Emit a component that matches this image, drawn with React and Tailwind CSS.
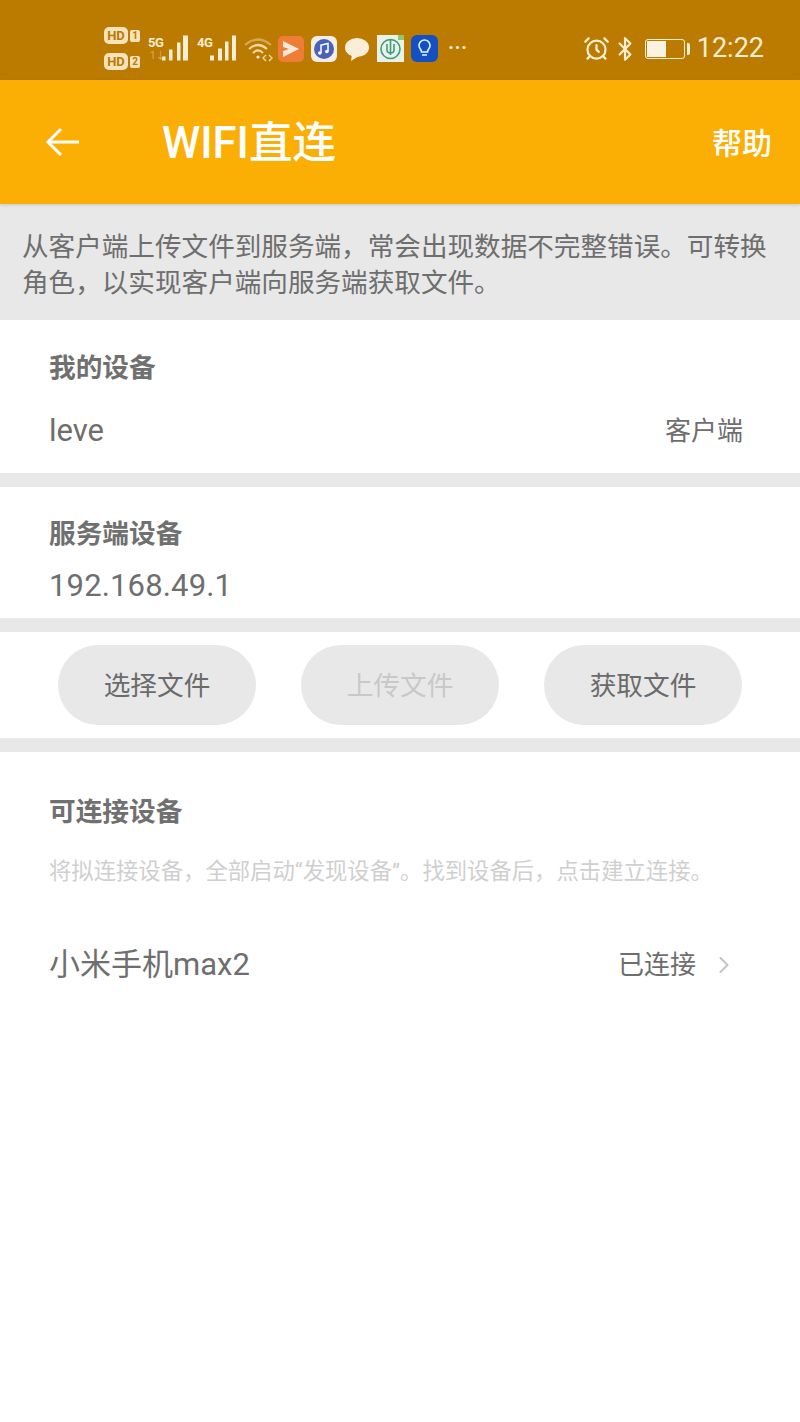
import { ChevronRight, AlarmClock, Bluetooth } from 'lucide-react';

const FONT = "font-['Roboto','Noto_Sans_CJK_SC',sans-serif]";

// positions of the four signal bars differ a little between the two sims
const Bars = ({ label, bars, roaming }) => (
  <div className="h-[30px] w-[40px] relative">
    <span className="absolute left-0 top-[2px] text-[13px] leading-[14px] font-bold tracking-[-0.5px] text-[#fbeed2]">{label}</span>
    {roaming && <span className="absolute left-[2px] top-[16px] text-[10px] leading-[12px] text-[#dcae62]">1↓</span>}
    <svg width="40" height="30" viewBox="0 0 40 30" fill="#fbeed2">
      {bars.map(([x, w, h]) => (
        <rect key={x} x={x} y={26.5 - h} width={w} height={h} />
      ))}
    </svg>
  </div>
);

const Hd = ({ n }) => (
  <div className="flex items-center gap-[2px]">
    <span className="rounded-[5px] bg-[#f6e3bb] text-[#bb7a00] text-[13px] leading-[17px] font-bold w-[24px] text-center">HD</span>
    <span className="rounded-[2px] bg-[#f6e3bb] text-[#bb7a00] text-[10px] leading-[12px] font-bold w-[10px] text-center">{n}</span>
  </div>
);

const AppIcons = () => (
  <>
    <svg width="26" height="26" viewBox="0 0 26 26">
      <rect width="26" height="26" rx="5" fill="#ee7d36" />
      <path d="M5 5 L21 13 L5 21 L5 15 L11 13 L5 11 Z" fill="#fbe9d8" />
    </svg>
    <svg width="26" height="26" viewBox="0 0 26 26">
      <rect width="26" height="26" rx="6" fill="#f4efe6" />
      <circle cx="13" cy="13" r="10" fill="#4a63b8" />
      <path d="M10 17 V9 L17 7.5 V15.5" fill="none" stroke="#fff" strokeWidth="1.5" />
      <circle cx="8.8" cy="17" r="1.8" fill="#fff" />
      <circle cx="15.8" cy="15.5" r="1.8" fill="#fff" />
    </svg>
    <svg width="26" height="26" viewBox="0 0 26 26">
      <ellipse cx="13" cy="11.5" rx="12" ry="9.5" fill="#fbeed8" />
      <path d="M8 18 L7 25 L15 20 Z" fill="#fbeed8" />
    </svg>
    <svg width="27" height="27" viewBox="0 0 27 27">
      <rect width="27" height="27" fill="#e9f2ea" />
      <circle cx="13.5" cy="14" r="9.5" fill="none" stroke="#3f9b78" strokeWidth="1.6" />
      <path d="M13.5 4 V20 M10 9 V15 Q10 18 13.5 18 Q17 18 17 15 V9" fill="none" stroke="#3f9b78" strokeWidth="1.6" />
      <rect x="21" y="0" width="6" height="5" fill="#8ccb6a" />
    </svg>
    <svg width="27" height="27" viewBox="0 0 27 27">
      <rect width="27" height="27" rx="6" fill="#1250c4" />
      <path d="M10.5 17 C10.5 14.5 8 13.5 8 10.5 A5.5 5.5 0 0 1 19 10.5 C19 13.5 16.5 14.5 16.5 17 Z M11 20 H16" fill="none" stroke="#e8eefc" strokeWidth="1.6" />
    </svg>
  </>
);

const StatusBar = () => (
  <div className="h-20 bg-[#bb7a00] flex items-center pl-[104px] pr-[36px] pt-[17px] text-[#fbeed2]">
    <div className="flex flex-col gap-[9px] w-[36px]">
      <Hd n="1" />
      <Hd n="2" />
    </div>
    <div className="flex items-center gap-[9px] ml-[8px]">
      <Bars label="5G" roaming bars={[[14, 3.5, 4], [21, 3.5, 11], [29, 3.5, 18], [35, 5, 25]]} />
      <Bars label="4G" bars={[[13, 4, 5], [21, 4, 12], [28, 3.5, 19], [35, 4, 25]]} />
    </div>
    <svg className="ml-[6px]" width="30" height="26" viewBox="0 0 30 26" fill="none" stroke="#f3d9a0" strokeWidth="2.2">
      <path d="M2 9 Q15 -2 28 9" stroke="#d9a951" />
      <path d="M6 13 Q15 5 24 13" />
      <path d="M10 17 Q15 12 20 17" />
      <circle cx="15" cy="21" r="1.6" fill="#fbeed2" stroke="none" />
      <path d="M23 19 L20 22 L23 25 M26 19 L29 22 L26 25" strokeWidth="1.4" />
    </svg>
    <div className="flex items-center gap-[7px] ml-[5px]">
      <AppIcons />
    </div>
    <span className="ml-[10px] text-[20px] leading-none font-bold tracking-[0.5px] pb-[3px]">···</span>
    <div className="flex-1" />
    <AlarmClock size={27} strokeWidth={2} />
    <Bluetooth size={26} strokeWidth={2} className="ml-[2px]" />
    <div className="ml-[7px] flex items-center">
      <div className="w-[40px] h-[20px] border-[1.5px] border-[#fbeed2] rounded-[3px] p-[1px]">
        <div className="w-[19px] h-full bg-[#fbf2e2]" />
      </div>
      <div className="w-[3px] h-[12px] ml-[2px] bg-[#fbeed2] rounded-r-[2px]" />
    </div>
    <span className={`ml-[7px] text-[27px] leading-none ${FONT}`}>12:22</span>
  </div>
);

const Divider = () => <div className="h-[14px] bg-[#e8e8e8]" />;

const FileButton = ({ label, disabled }) => (
  <button className={`w-[198px] h-[80px] rounded-full bg-[#e8e8e8] pt-[3px] text-[26.7px] ${disabled ? 'text-[#c8c8c8]' : 'text-[#6b6b6b]'}`}>
    {label}
  </button>
);

const App = () => (
  <div className={`w-[800px] h-[1422px] overflow-hidden bg-white text-[#6e6e6e] ${FONT}`}>
    <StatusBar />

    <header className="h-[124px] bg-[#fbae03] flex items-center text-white shadow-[0_1px_3px_rgba(0,0,0,0.15)] relative">
      <svg className="ml-[45px]" width="34" height="30" viewBox="0 0 34 30" fill="none" stroke="currentColor" strokeWidth="3">
        <path d="M34 15 H3 M16 2 L3 15 L16 28" />
      </svg>
      <h1 className="ml-[83px] pt-[4px] text-[43.5px] leading-none font-medium">WIFI直连</h1>
      <span className="ml-auto mr-[28px] pt-[3px] text-[30px] leading-none font-medium">帮助</span>
    </header>

    <div className="h-[116px] bg-[#e8e8e8] pl-[22px] pr-[20px] pt-[25px] text-[26.6px] leading-[36px]">
      从客户端上传文件到服务端，常会出现数据不完整错误。可转换角色，以实现客户端向服务端获取文件。
    </div>

    <section className="h-[153px] px-[49px] pt-[30px]">
      <h2 className="text-[26.7px] leading-[36px] font-bold text-[#707070]">我的设备</h2>
      <div className="mt-[26px] flex items-center justify-between pr-[8px]">
        <span className="text-[31px] leading-[38px]">leve</span>
        <span className="text-[26px] leading-[36px]">客户端</span>
      </div>
    </section>
    <Divider />

    <section className="h-[131px] px-[49px] pt-[29px]">
      <h2 className="text-[26.7px] leading-[36px] font-bold text-[#707070]">服务端设备</h2>
      <p className="mt-[16px] text-[31px] leading-[36px] tracking-[0.15px]">192.168.49.1</p>
    </section>
    <Divider />

    <div className="h-[106px] flex items-center justify-between px-[58px]">
      <FileButton label="选择文件" />
      <FileButton label="上传文件" disabled />
      <FileButton label="获取文件" />
    </div>
    <Divider />

    <section className="px-[49px] pt-[42px]">
      <h2 className="text-[26.7px] leading-[36px] font-bold text-[#707070]">可连接设备</h2>
      <p className="mt-[23px] text-[22.35px] leading-[36px] text-[#cfcfcf]">将拟连接设备，全部启动“发现设备”。找到设备后，点击建立连接。</p>
      <div className="mt-[58px] flex items-center">
        <span className="text-[31px] leading-[36px]">小米手机max2</span>
        <span className="ml-auto text-[26px] leading-[36px]">已连接</span>
        <ChevronRight size={28} strokeWidth={1.8} className="ml-[14px] mr-[13px] text-[#c4c4c4]" />
      </div>
    </section>
  </div>
);

export default App;
